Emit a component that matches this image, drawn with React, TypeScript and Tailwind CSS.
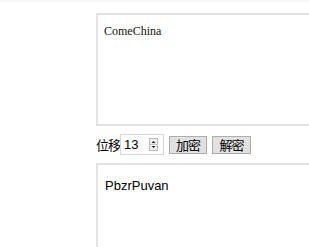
import React from "react";

export default function App() {
  return (
    <div className="relative w-[309px] h-[247px] overflow-hidden bg-white">
      <div className="h-[2px] w-full bg-[#f6f6f6]" />
      <div className="pl-[96px] pt-[11px] flex flex-col">
        <div className="w-[260px] h-[113px] border-2 border-[#e2e2e2] pl-[6px] pt-[9px] text-[12px] leading-[15px] text-[#111]" style={{ fontFamily: '"Liberation Serif", "Noto Sans CJK SC", serif' }}>
          ComeChina
        </div>
        <div className="mt-[8px] h-[21px] flex items-center" style={{ fontFamily: '"Noto Sans CJK SC", "Liberation Sans", sans-serif' }}>
          <span className="text-[13px] tracking-[-1px] leading-none text-black w-[24px]">位移</span>
          <div className="w-[44px] h-[21px] border border-[#d6d6d6] flex items-center justify-between pl-[3px] pr-[5px]">
            <span className="text-[13px] text-black" style={{ fontFamily: '"Liberation Sans", sans-serif' }}>13</span>
            <svg width="9" height="13" viewBox="0 0 9 13">
              <rect x="0.5" y="0.5" width="8" height="12" fill="#f0f0f0" stroke="#bcbcbc" />
              <line x1="1" y1="6.5" x2="8" y2="6.5" stroke="#c8c8c8" />
              <path d="M2.5 5 L4.5 3 L6.5 5 Z" fill="#222" />
              <path d="M2.5 8 L4.5 10 L6.5 8 Z" fill="#222" />
            </svg>
          </div>
          <div className="ml-[5px] w-[38px] h-[18px] border border-[#adadad] bg-[#e1e1e1] flex items-center justify-center text-[13px] tracking-[-1px] leading-none text-black">加密</div>
          <div className="ml-[5px] w-[39px] h-[18px] border border-[#adadad] bg-[#e1e1e1] flex items-center justify-center text-[13px] tracking-[-1px] leading-none text-black">解密</div>
        </div>
        <div className="mt-[8px] w-[260px] h-[120px] border-2 border-[#e2e2e2] pl-[7px] pt-[12px] text-[13px] leading-[17px] text-black" style={{ fontFamily: '"Liberation Sans", "Noto Sans CJK SC", sans-serif' }}>
          PbzrPuvan
        </div>
      </div>
    </div>
  );
}
